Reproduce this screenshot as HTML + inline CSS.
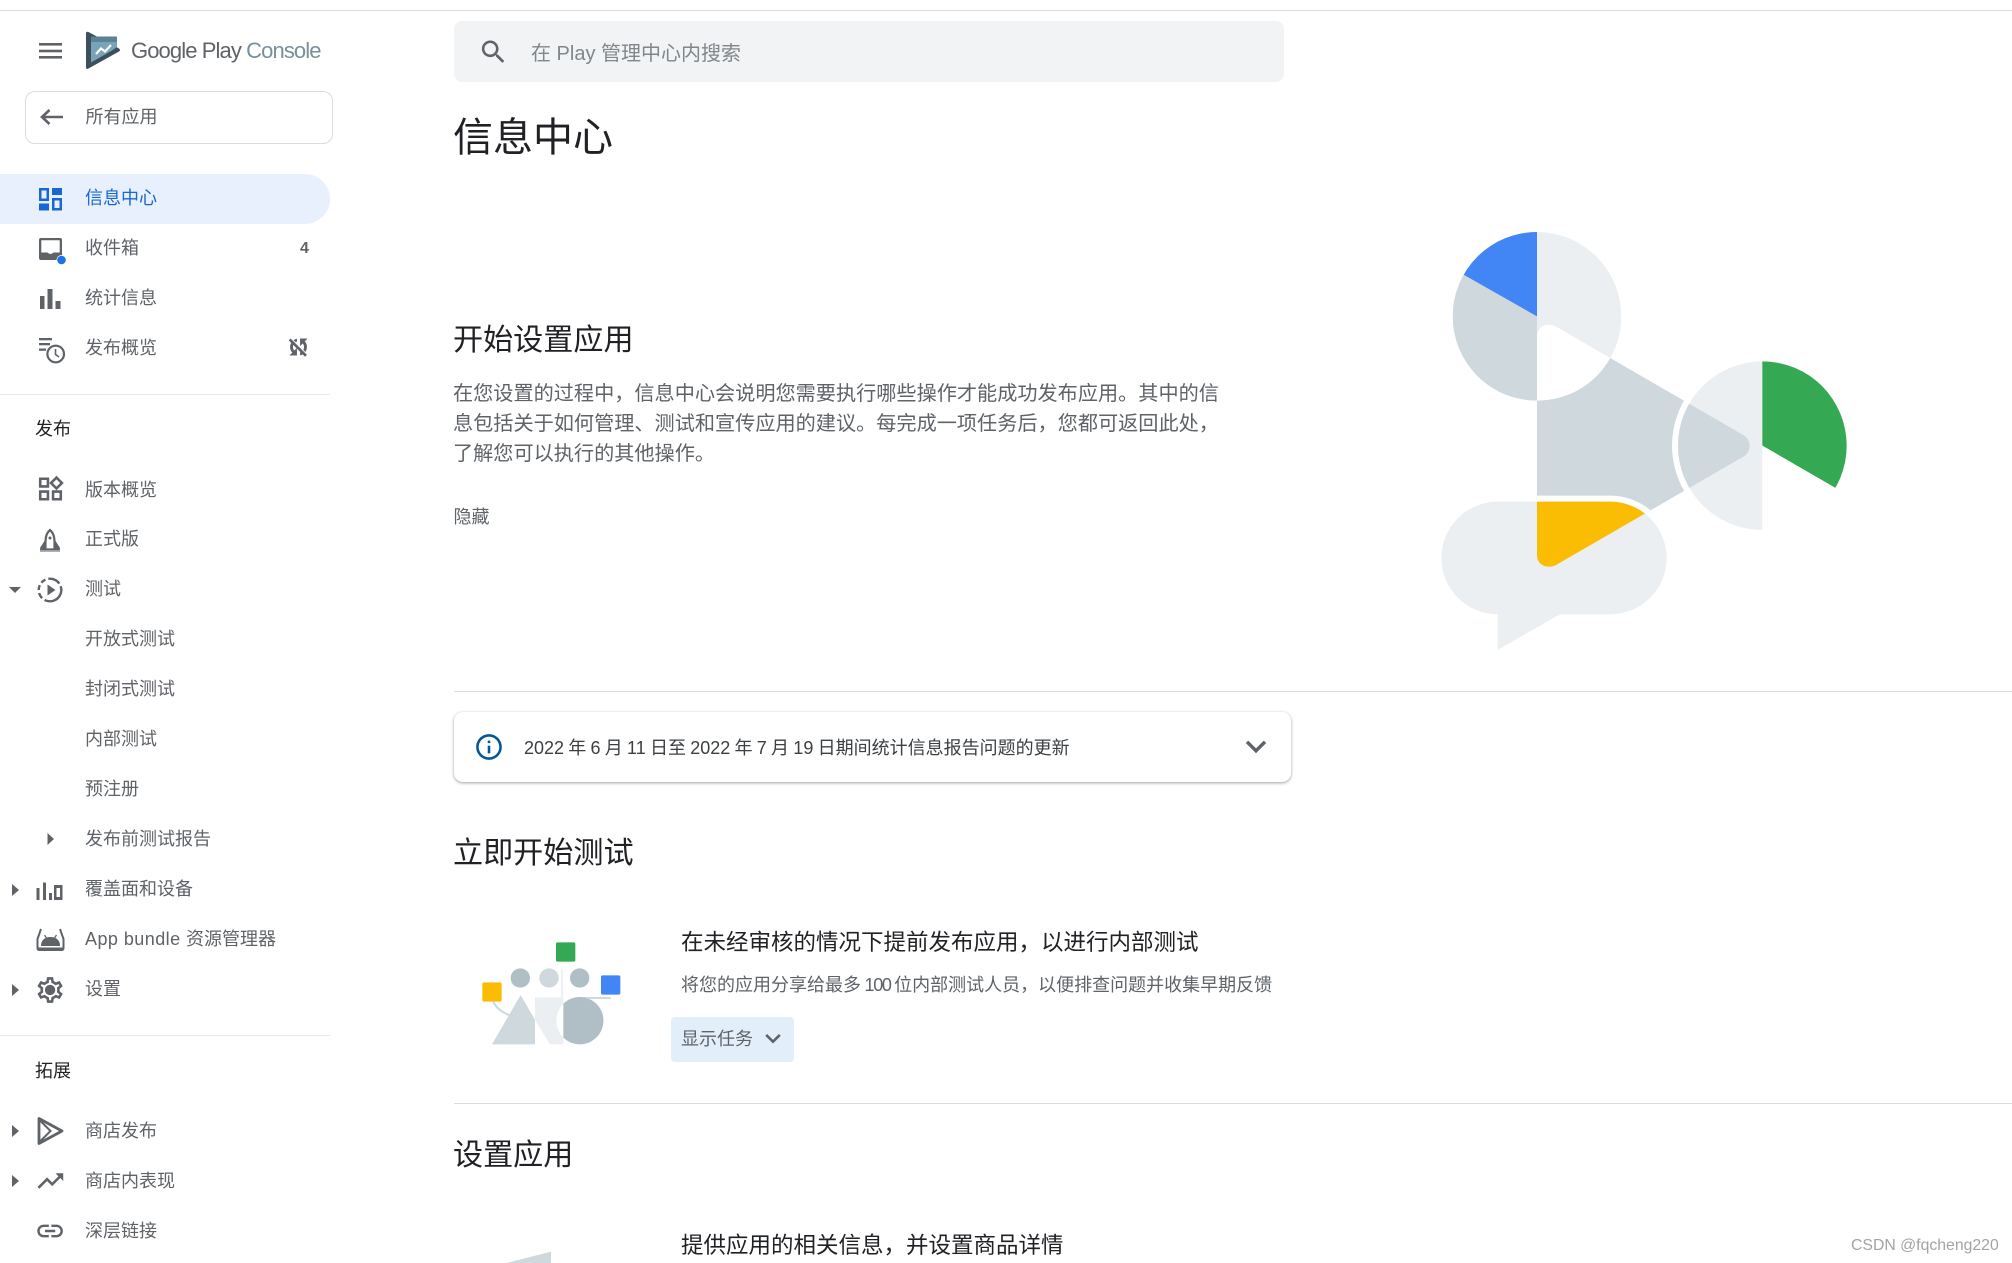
<!DOCTYPE html>
<html lang="zh-CN">
<head>
<meta charset="utf-8">
<title>Google Play Console</title>
<style>
html,body{margin:0;padding:0;background:#fff}
body{width:2012px;height:1263px;position:relative;overflow:hidden;font-family:"Liberation Sans","Noto Sans CJK SC",sans-serif;color:#5f6368}
.t{position:absolute;white-space:nowrap;line-height:30px;height:30px;font-size:18px;color:#5f6368}
.n{left:85px}
.h{color:#202124}
.box{position:absolute;box-sizing:border-box}
svg.o{position:absolute;left:0;top:0}
</style>
</head>
<body>
<div class="box" style="left:0;top:10px;width:2012px;height:1px;background:#dadce0"></div>

<!-- sidebar shapes -->
<div class="box" style="left:25px;top:91px;width:308px;height:53px;border:1px solid #dadce0;border-radius:10px"></div>
<div class="box" style="left:0;top:174px;width:330px;height:50px;background:#e8f0fe;border-radius:0 25px 25px 0"></div>
<div class="box" style="left:0;top:394px;width:330px;height:1px;background:#e8eaed"></div>
<div class="box" style="left:0;top:1035px;width:330px;height:1px;background:#e8eaed"></div>

<!-- logo text -->
<div class="t" style="left:131px;top:36px;font-size:22px;letter-spacing:-.9px;color:#5f6368">Google Play <span style="color:#78909c">Console</span></div>

<!-- sidebar text -->
<div class="t n" style="top:102px;left:85.500px">所有应用</div>
<div class="t n" style="top:183px;color:#1967d2">信息中心</div>
<div class="t n" style="top:233px">收件箱</div>
<div class="t" style="left:300px;top:234px;font-size:16px;font-weight:700">4</div>
<div class="t n" style="top:283px">统计信息</div>
<div class="t n" style="top:333px">发布概览</div>
<div class="t h" style="left:35px;top:414px">发布</div>
<div class="t n" style="top:475px">版本概览</div>
<div class="t n" style="top:524px">正式版</div>
<div class="t n" style="top:574px">测试</div>
<div class="t n" style="top:624px">开放式测试</div>
<div class="t n" style="top:674px">封闭式测试</div>
<div class="t n" style="top:724px">内部测试</div>
<div class="t n" style="top:774px">预注册</div>
<div class="t n" style="top:824px">发布前测试报告</div>
<div class="t n" style="top:874px">覆盖面和设备</div>
<div class="t n" style="top:924px"><span style="letter-spacing:.45px">App bundle </span>资源管理器</div>
<div class="t n" style="top:974px">设置</div>
<div class="t h" style="left:35px;top:1056px">拓展</div>
<div class="t n" style="top:1116px">商店发布</div>
<div class="t n" style="top:1166px">商店内表现</div>
<div class="t n" style="top:1216px">深层链接</div>

<!-- main -->
<div class="box" style="left:454px;top:21px;width:830px;height:61px;background:#f1f3f4;border-radius:8px"></div>
<div class="t" style="left:531px;top:39px;font-size:20px;color:#80868b">在 Play 管理中心内搜索</div>
<div class="t h" style="left:453px;top:113px;font-size:40px;line-height:50px;height:50px">信息中心</div>
<div class="t h" style="left:453px;top:321px;font-size:30.100px;line-height:40px;height:40px">开始设置应用</div>
<div class="t" style="left:453px;top:379px;font-size:20.160px">在您设置的过程中，信息中心会说明您需要执行哪些操作才能成功发布应用。其中的信</div>
<div class="t" style="left:453px;top:409px;font-size:20.160px">息包括关于如何管理、测试和宣传应用的建议。每完成一项任务后，您都可返回此处，</div>
<div class="t" style="left:453px;top:439px;font-size:20.160px">了解您可以执行的其他操作。</div>
<div class="t" style="left:453.500px;top:502px">隐藏</div>

<div class="box" style="left:454px;top:691px;width:1558px;height:1px;background:#dadce0"></div>
<div class="box" style="left:454px;top:712px;width:837px;height:70px;background:#fff;border-radius:9px;box-shadow:0 1px 2px rgba(60,64,67,.3),0 1px 3px 1px rgba(60,64,67,.15)"></div>
<div class="t" style="left:524px;top:733px;color:#3c4043;word-spacing:-.75px">2022 年 6 月 11 日至 2022 年 7 月 19 日期间统计信息报告问题的更新</div>

<div class="t h" style="left:453px;top:834px;font-size:30.100px;line-height:40px;height:40px">立即开始测试</div>
<div class="t h" style="left:681px;top:928px;font-size:22.500px">在未经审核的情况下提前发布应用，以进行内部测试</div>
<div class="t" style="left:681px;top:970px;word-spacing:-1.500px">将您的应用分享给最多 <span style="letter-spacing:-1.300px">100</span> 位内部测试人员，以便排查问题并收集早期反馈</div>
<div class="box" style="left:671px;top:1017px;width:123px;height:45px;background:#e3eefb;border-radius:4px"></div>
<div class="t" style="left:681px;top:1024px">显示任务</div>
<div class="box" style="left:454px;top:1103px;width:1558px;height:1px;background:#dadce0"></div>
<div class="t h" style="left:453px;top:1136px;font-size:30.100px;line-height:40px;height:40px">设置应用</div>
<div class="t h" style="left:681px;top:1231px;font-size:22.500px">提供应用的相关信息，并设置商品详情</div>
<div class="t" style="left:1851px;top:1231px;font-size:15.800px;color:#a3a3a3">CSDN @fqcheng220</div>

<svg class="o" width="2012" height="1263" viewBox="0 0 2012 1263" xmlns="http://www.w3.org/2000/svg">
<defs>
<clipPath id="cTop"><circle cx="411" cy="349" r="253"/></clipPath>
<clipPath id="cRight"><circle cx="1087" cy="737" r="253"/></clipPath>
<clipPath id="cBubble"><rect x="124" y="905" width="676" height="338" rx="169"/></clipPath>
<path id="tri" d="M411 410C411 380 440 365 468 380L1030 705C1055 720 1055 755 1030 770L468 1095C440 1108 411 1095 411 1065Z"/>
</defs>

<!-- hamburger -->
<g fill="#5f6368">
<rect x="39" y="43" width="23" height="2.600"/><rect x="39" y="49.700" width="23" height="2.600"/><rect x="39" y="56" width="23" height="2.600"/>
</g>

<!-- logo -->
<path d="M86 33.500Q86 31 88.500 32L119 48.500Q121 50 119 51.500L88.500 68.500Q86 70 86 67Z" fill="#3c4f5a"/>
<path d="M91 36.500H117V47L112 50.500 91 62.500Z" fill="#7ba3b6"/>
<rect x="91" y="36.500" width="26" height="5.500" fill="#5b8296"/>
<path d="M96 54L101 48.500 105 51.500 111 45" fill="none" stroke="#fff" stroke-width="2.200"/>

<!-- back arrow -->
<path d="M63 117H42.500M49.500 110L42 117 49.500 124" fill="none" stroke="#5f6368" stroke-width="2.600"/>

<!-- dashboard -->
<g fill="#1967d2">
<path fill-rule="evenodd" d="M39 188H49V201H39ZM41.500 190.500V198.500H46.500V190.500Z"/>
<rect x="52" y="188" width="10" height="7"/>
<rect x="39" y="203.500" width="10" height="7"/>
<path fill-rule="evenodd" d="M52 198H62V210.500H52ZM54.500 200.500V208H59.500V200.500Z"/>
</g>

<!-- inbox -->
<g fill="#5f6368">
<path fill-rule="evenodd" d="M41 238H60Q62 238 62 240V258Q62 260 60 260H41Q39 260 39 258V240Q39 238 41 238ZM41.300 240.300V252.500H47.500Q50.500 255.500 53.500 252.500H59.700V240.300Z"/>
</g>
<circle cx="61.500" cy="260" r="5" fill="#fff"/>
<circle cx="61.500" cy="260" r="4.300" fill="#1a73e8"/>

<!-- bar chart -->
<g fill="#5f6368"><rect x="40" y="296" width="4.500" height="13"/><rect x="47.500" y="289" width="5" height="20"/><rect x="55.500" y="301" width="5" height="8"/></g>

<!-- release overview clock -->
<g fill="#5f6368"><rect x="39" y="338" width="13" height="2.300"/><rect x="39" y="343" width="11" height="2.300"/><rect x="39" y="348.500" width="7" height="2.300"/></g>
<circle cx="55.700" cy="354" r="8.300" fill="none" stroke="#5f6368" stroke-width="2.200"/>
<path d="M55.500 349V354.500L59 357" fill="none" stroke="#5f6368" stroke-width="1.600"/>

<!-- sync disabled -->
<g transform="translate(286.500,335)" fill="#5f6368" stroke="#5f6368" stroke-width=".9"><path d="M10 6.350V4.260c-.8.21-1.550.54-2.230.96l1.460 1.460c.25-.12.5-.24.77-.33zm-7.140-.94l2.360 2.360C4.450 8.990 4 10.440 4 12c0 2.210.91 4.200 2.360 5.640L4 20h6v-6l-2.240 2.240C6.680 15.150 6 13.660 6 12c0-1 .25-1.940.68-2.770l8.080 8.080c-.25.13-.5.25-.77.34v2.090c.8-.21 1.550-.54 2.230-.96l2.360 2.360 1.270-1.270L4.140 4.140 2.860 5.410zM20 4h-6v6l2.240-2.240C17.320 8.850 18 10.340 18 12c0 1-.25 1.940-.68 2.770l1.460 1.460C19.550 15.010 20 13.560 20 12c0-2.210-.91-4.200-2.360-5.640L20 4z"/></g>

<!-- widgets -->
<g transform="translate(35.100,473.600) scale(1.283)" fill="#5f6368"><path d="M16.660 4.520l2.830 2.830-2.830 2.830-2.830-2.830 2.830-2.830M9 5v4H5V5h4m10 10v4h-4v-4h4M9 15v4H5v-4h4m7.660-13.310L11 7.340 16.660 13l5.660-5.660-5.660-5.650zM11 3H3v8h8V3zm10 10h-8v8h8v-8zm-10 0H3v8h8v-8z"/></g>

<!-- rocket -->
<path d="M45.500 541L41 548V550H45.500ZM54.500 541L59 548V550H54.500Z" fill="#5f6368" stroke="#5f6368" stroke-width="1.800" stroke-linejoin="round"/>
<path d="M50 530C46.500 533 45.500 537.500 45.500 541.500V549.500H54.500V541.500C54.500 537.500 53.500 533 50 530Z" fill="#fff" stroke="#5f6368" stroke-width="2.200"/>
<circle cx="50" cy="538" r="1.500" fill="#5f6368"/>
<rect x="40" y="550" width="20" height="1.800" fill="#9aa0a6"/>

<!-- test -->
<path d="M9 587H21L15 593Z" fill="#5f6368"/>
<circle cx="50" cy="590" r="11.300" fill="none" stroke="#5f6368" stroke-width="2.400" stroke-dasharray="5 3 27 3 6 3 5 3" transform="rotate(-60 50 590)"/>
<path d="M47.500 584.500L55.500 590 47.500 595.500Z" fill="#5f6368"/>

<!-- expander arrows -->
<g fill="#5f6368">
<path d="M47.500 833L54 839 47.500 845Z"/>
<path d="M12 884L19 890 12 896Z"/>
<path d="M12 984L19 990 12 996Z"/>
<path d="M12 1125L19 1131 12 1137Z"/>
<path d="M12 1175L19 1181 12 1187Z"/>
</g>

<!-- coverage -->
<g fill="#5f6368">
<rect x="36.500" y="888" width="3" height="12"/>
<rect x="43" y="882.500" width="3" height="17.500"/>
<rect x="49" y="893" width="3" height="7"/>
<path fill-rule="evenodd" d="M54 885H62.500V900H54ZM56.500 888V897H60V888Z"/>
</g>

<!-- bundle -->
<path d="M41 929L37.500 939V948Q37.500 950 39.500 950H61.500Q63.500 950 63.500 948V939L60 929" fill="none" stroke="#5f6368" stroke-width="2"/>
<path d="M41 946H60V945.500C60 941 57 937 50.500 937S41 941 41 945.500Z" fill="#5f6368"/>
<path d="M44.500 935L46.500 938M56.500 935L54.500 938" stroke="#5f6368" stroke-width="1.200"/>
<rect x="37.500" y="947.500" width="26" height="2.700" fill="#5f6368"/>

<!-- settings -->
<g transform="translate(34.700,974.600) scale(1.283)" fill="#5f6368"><path d="M19.430 12.980c.04-.32.07-.64.07-.98 0-.34-.03-.66-.07-.98l2.110-1.650c.19-.15.24-.42.12-.64l-2-3.460c-.09-.16-.26-.25-.44-.25-.06 0-.12.01-.17.03l-2.490 1c-.52-.4-1.080-.73-1.690-.98l-.38-2.650C14.460 2.180 14.250 2 14 2h-4c-.25 0-.46.18-.49.42l-.38 2.650c-.61.25-1.170.59-1.690.98l-2.490-1c-.06-.02-.12-.03-.18-.03-.17 0-.34.09-.43.25l-2 3.460c-.13.22-.07.49.12.64l2.110 1.650c-.04.32-.07.65-.07.98 0 .33.03.66.07.98l-2.110 1.650c-.19.15-.24.42-.12.64l2 3.460c.09.16.26.25.44.25.06 0 .12-.01.17-.03l2.490-1c.52.4 1.080.73 1.690.98l.38 2.650c.03.24.24.42.49.42h4c.25 0 .46-.18.49-.42l.38-2.650c.61-.25 1.170-.59 1.690-.98l2.490 1c.06.02.12.03.18.03.17 0 .34-.09.43-.25l2-3.460c.12-.22.07-.49-.12-.64l-2.110-1.650zm-1.980-1.710c.04.31.05.52.05.73 0 .21-.02.43-.05.73l-.14 1.130.89.7 1.080.84-.7 1.210-1.270-.51-1.040-.42-.9.68c-.43.32-.84.56-1.250.73l-1.060.43-.16 1.130-.2 1.350h-1.400l-.19-1.350-.16-1.130-1.060-.43c-.43-.18-.83-.41-1.230-.71l-.91-.7-1.060.43-1.270.51-.7-1.210 1.080-.84.89-.7-.14-1.130c-.03-.31-.05-.54-.05-.74s.02-.43.05-.73l.14-1.130-.89-.7-1.080-.84.7-1.210 1.270.51 1.040.42.9-.68c.43-.32.84-.56 1.250-.73l1.060-.43.16-1.130.2-1.350h1.390l.19 1.350.16 1.130 1.060.43c.43.18.83.41 1.230.71l.91.7 1.060-.43 1.270-.51.7 1.210-1.070.85-.89.7.14 1.130zM12 8c-2.210 0-4 1.790-4 4s1.790 4 4 4 4-1.790 4-4-1.790-4-4-4z"/></g>

<!-- store listing -->
<path d="M39 1118.500L62 1131 39 1143.500Z" fill="none" stroke="#5f6368" stroke-width="2.800" stroke-linejoin="round"/>
<path d="M39 1119.500L50.500 1131 39 1142.500M50.500 1131L43 1123.500" fill="none" stroke="#5f6368" stroke-width="2"/>

<!-- trending up -->
<g transform="translate(35,1165.600) scale(1.283)" fill="#5f6368"><path d="M16 6l2.290 2.290-4.880 4.880-4-4L2 16.590 3.410 18l6-6 4 4 6.300-6.290L22 12V6z"/></g>

<!-- link -->
<g transform="translate(34.700,1215.600) scale(1.283)" fill="#5f6368"><path d="M3.900 12c0-1.710 1.390-3.100 3.100-3.100h4V7H7c-2.760 0-5 2.240-5 5s2.240 5 5 5h4v-1.900H7c-1.710 0-3.100-1.390-3.100-3.100zM8 13h8v-2H8v2zm9-6h-4v1.900h4c1.710 0 3.100 1.390 3.100 3.100s-1.390 3.100-3.100 3.100h-4V17h4c2.760 0 5-2.240 5-5s-2.240-5-5-5z"/></g>

<!-- search -->
<g transform="translate(478,36.600) scale(1.283)" fill="#5f6368"><path d="M15.500 14h-.79l-.28-.27C15.410 12.590 16 11.110 16 9.500 16 5.910 13.090 3 9.500 3S3 5.910 3 9.500 5.910 16 9.500 16c1.610 0 3.090-.59 4.230-1.570l.27.28v.79l5 4.990L20.490 19l-4.990-5zm-6 0C7.010 14 5 11.990 5 9.500S7.010 5 9.500 5 14 7.010 14 9.500 11.990 14 9.500 14z"/></g>

<!-- info -->
<g transform="translate(473.600,731.600) scale(1.283)" fill="#01579b"><path d="M11 7h2v2h-2zm0 4h2v6h-2zm1-9C6.480 2 2 6.480 2 12s4.480 10 10 10 10-4.480 10-10S17.520 2 12 2zm0 18c-4.410 0-8-3.590-8-8s3.590-8 8-8 8 3.590 8 8-3.590 8-8 8z"/></g>

<!-- alert chevron -->
<g transform="translate(1235.600,726) scale(1.700)" fill="#5f6368"><path d="M16.590 8.590L12 13.170 7.410 8.590 6 10l6 6 6-6z"/></g>
<!-- button chevron -->
<g transform="translate(757.600,1023) scale(1.283)" fill="#5f6368"><path d="M16.590 8.590L12 13.170 7.410 8.590 6 10l6 6 6-6z"/></g>

<!-- main illustration -->
<svg x="1400" y="200" width="480" height="480" viewBox="0 0 1440 1440">
  <use href="#tri" fill="#cfd8dc"/>
  <g clip-path="url(#cTop)">
    <rect x="158" y="96" width="253" height="506" fill="#cfd8dc"/>
    <path d="M411 349V90H100V172.500Z" fill="#4285f4"/>
    <rect x="411" y="96" width="253" height="506" fill="#eceff1"/>
    <use href="#tri" fill="#fff"/>
  </g>
  <circle cx="1087" cy="737" r="262" fill="none" stroke="#fff" stroke-width="18"/>
  <g clip-path="url(#cRight)">
    <rect x="834" y="484" width="253" height="506" fill="#eceff1"/>
    <path d="M1087 737V480H1400V918Z" fill="#34a853"/>
    <path d="M1087 737L1400 918V1000H1087Z" fill="#fff"/>
    <use href="#tri" fill="#cfd8dc"/>
  </g>
  <rect x="106" y="887" width="712" height="374" rx="187" fill="#fff"/>
  <rect x="124" y="905" width="676" height="338" rx="169" fill="#eceff1"/>
  <path d="M293 1240V1350L480 1243V1240Z" fill="#eceff1"/>
  <g clip-path="url(#cBubble)"><use href="#tri" fill="#fbbc04"/></g>
</svg>

<!-- small illustration -->
<svg x="440" y="900" width="400" height="363" viewBox="0 0 1200 1089">
  <path d="M160 305Q172 332 212 347" fill="none" stroke="#cfd8dc" stroke-width="6"/>
  <rect x="348" y="127" width="58" height="58" rx="5" fill="#34a853"/>
  <rect x="127" y="247" width="58" height="58" rx="5" fill="#fbbc04"/>
  <rect x="483" y="226" width="58" height="58" rx="5" fill="#4285f4"/>
  <circle cx="241" cy="234" r="29" fill="#b0bec5"/>
  <circle cx="327" cy="234" r="29" fill="#cfd8dc"/>
  <circle cx="419" cy="234" r="29" fill="#b0bec5"/>
  <rect x="364" y="207" width="5" height="90" fill="#eceff1"/>
  <path d="M285 292H370V433H330L285 360Z" fill="#eceff1"/>
  <path d="M242 285L285 360V433H156Z" fill="#cfd8dc"/>
  <path d="M420 294H510" stroke="#cfd8dc" stroke-width="6" stroke-linecap="round"/>
  <circle cx="420" cy="362" r="71" fill="#fff"/>
  <path d="M370 311A71 71 0 1 1 370 413Z" fill="#b0bec5"/>
  <path d="M333 1055V1089H200Z" fill="#cfd8dc"/>
</svg>
</svg>
</body>
</html>
